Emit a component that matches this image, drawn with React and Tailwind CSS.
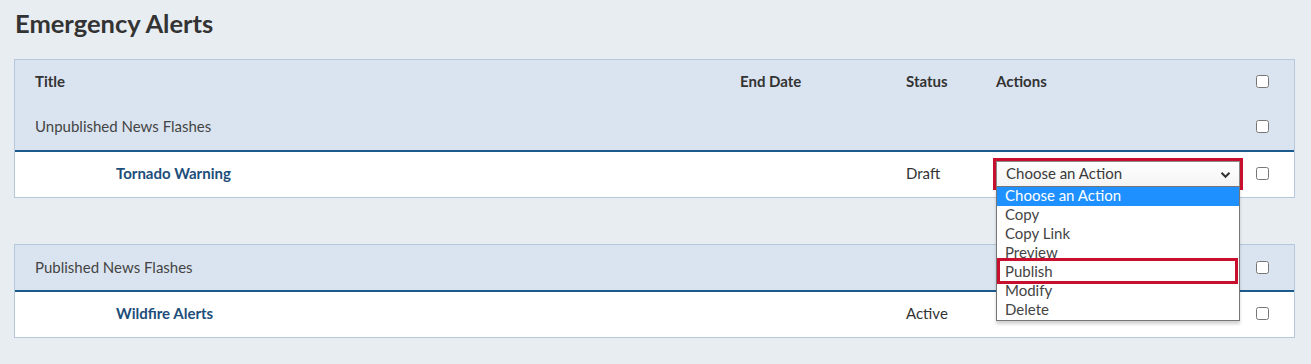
import React from 'react';

const font = { fontFamily: 'Lato, "Noto Sans", sans-serif' };

function Check() {
  return (
    <input
      type="checkbox"
      className="w-[13px] h-[13px] m-0 accent-[#1e90ff]"
    />
  );
}

function Row({ className = '', title, endDate, status, action, indent = false }) {
  return (
    <div className={`flex items-center pl-5 ${className}`}>
      <div className={`w-[705px] shrink-0 ${indent ? 'pl-[81px]' : ''}`}>{title}</div>
      <div className="w-[166px] shrink-0">{endDate}</div>
      <div className="w-[90px] shrink-0">{status}</div>
      <div className="w-[260px] shrink-0">{action}</div>
      <div className="flex items-center">
        <Check />
      </div>
    </div>
  );
}

const options = ['Copy', 'Copy Link', 'Preview', 'Publish', 'Modify', 'Delete'];

function ActionSelect() {
  return (
    <div className="relative w-[244px] mt-[2px]">
      <div className="flex items-center justify-between h-[26px] pl-[9px] pr-[8px] pb-[1px] bg-gradient-to-b from-white to-[#f4f4f4] border border-[#8a8a8a] outline-[3px] outline-solid outline-[#c8102e] text-[15px] text-[#3a3a3a]">
        <span>Choose an Action</span>
        <svg width="11" height="8" viewBox="0 0 11 8" className="mt-[2px]">
          <path d="M1.5 1.8 L5.5 5.8 L9.5 1.8" fill="none" stroke="#333" strokeWidth="2" />
        </svg>
      </div>
      <div className="absolute left-0 top-[25px] z-10 w-[244px] bg-white border border-[#767676] shadow-[0_3px_3px_rgba(0,0,0,0.18)] text-[15px] leading-[16px] text-[#444]">
        <div className="h-[19px] pl-[8px] bg-[#1e90ff] text-white">Choose an Action</div>
        {options.map((o) => (
          <div key={o} className="relative h-[19px] pl-[8px]">
            {o}
            {o === 'Publish' && (
              <div className="absolute -top-[5px] -bottom-[2px] left-0 right-[1px] border-[3px] border-[#c8102e]" />
            )}
          </div>
        ))}
      </div>
    </div>
  );
}

export default function App() {
  return (
    <div className="min-h-[364px] bg-[#e8edf2] pt-[7px] pb-[26px] text-[15px] text-[#333]" style={font}>
      <h1 className="pl-[15px] text-[25.5px] leading-[32px] font-bold text-[#333] mb-[20px]">
        Emergency Alerts
      </h1>

      <div className="ml-[14px] mr-[16px] border border-[#b5c7db] bg-white">
        <div className="bg-[#dae4f0]">
          <Row
            className="h-[44px] font-bold pb-[1px]"
            title="Title"
            endDate="End Date"
            status="Status"
            action="Actions"
          />
          <Row className="h-[46px] text-[#444] pb-[1px]" title="Unpublished News Flashes" />
        </div>
        <div className="h-[2px] bg-[#1b5a8c]" />
        <Row
          className="h-[45px] pb-[3px]"
          indent
          title={<span className="font-bold text-[#1d4e7a]">Tornado Warning</span>}
          status="Draft"
          action={<ActionSelect />}
        />
      </div>

      <div className="ml-[14px] mr-[16px] mt-[46px] border border-[#b5c7db] bg-white">
        <div className="bg-[#dae4f0]">
          <Row className="h-[45px] text-[#444] pb-[1px]" title="Published News Flashes" />
        </div>
        <div className="h-[2px] bg-[#1b5a8c]" />
        <Row
          className="h-[45px] pb-[3px]"
          indent
          title={<span className="font-bold text-[#1d4e7a]">Wildfire Alerts</span>}
          status="Active"
        />
      </div>
    </div>
  );
}
